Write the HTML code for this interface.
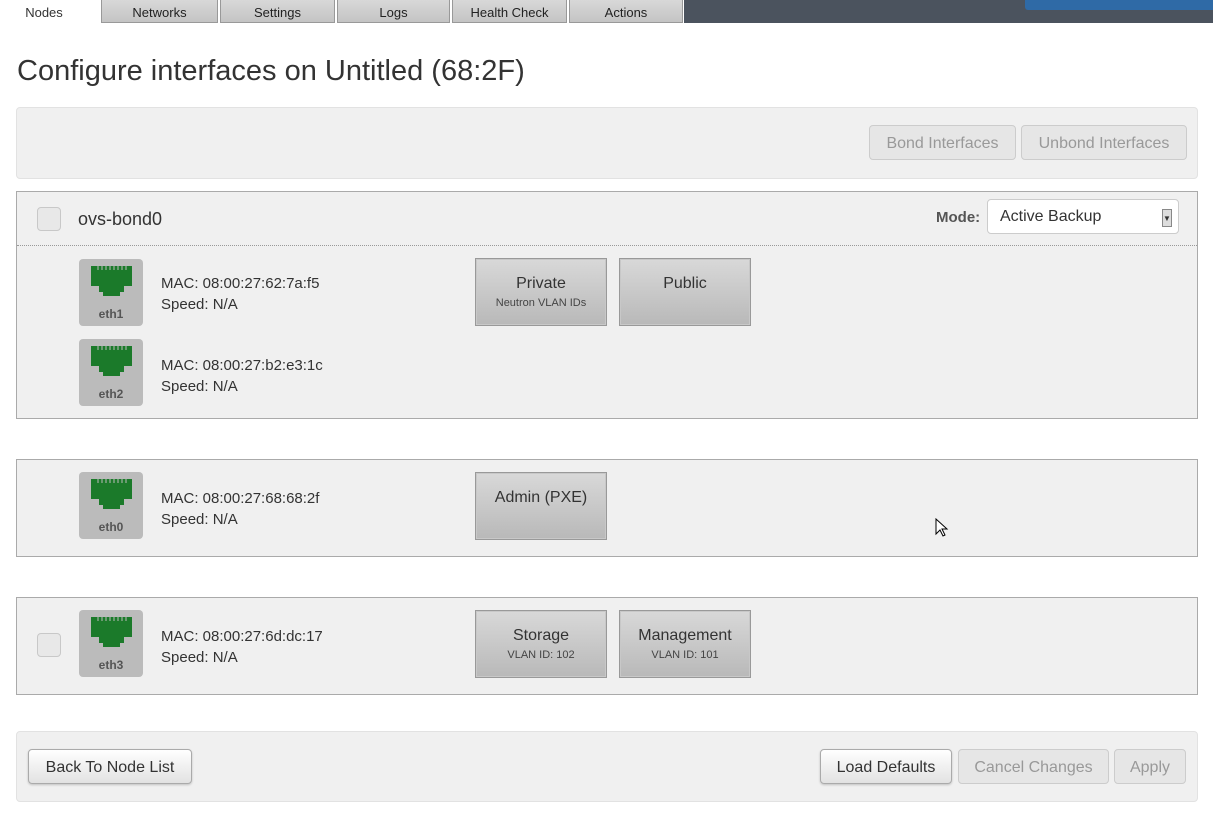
<!DOCTYPE html>
<html><head><style>
*{box-sizing:border-box}
body{margin:0;width:1213px;height:816px;overflow:hidden;background:#fff;font-family:"Liberation Sans",sans-serif;color:#333;position:relative}
.top{position:absolute;left:0;top:0;width:1213px;height:23px;background:#fff}
.dark{position:absolute;left:684px;top:0;width:529px;height:23px;background:#4b535e}
.tab{position:absolute;top:0;height:23px;background:linear-gradient(#d8d8d8,#c4c4c4);border:1px solid #999;border-top:none;font-size:13px;text-align:center;line-height:25px;color:#222}
.deploy{position:absolute;left:1025px;top:-6px;width:200px;height:16px;background:#2f6aa6;border-radius:3px}
h1{position:absolute;left:17px;top:55px;margin:0;font-weight:normal;font-size:29px;color:#333}
.well{position:absolute;left:16px;background:#f0f0f0;border:1px solid #e2e2e2;border-radius:4px}
.panel{position:absolute;left:16px;width:1182px;background:#f0f0f0;border:1px solid #aaa}
.btn{position:absolute;height:35px;border:1px solid #ccc;border-radius:4px;background:#e6e6e6;color:#999;font-size:16px;text-align:center;line-height:35px}
.btn.act{background:linear-gradient(#fff,#e2e2e2);border-color:#aaa;color:#333;box-shadow:0 1px 2px rgba(0,0,0,.2)}
.cb{position:absolute;width:24px;height:24px;border:1px solid #c8c8c8;border-radius:4px;background:#e8e8e8}
.port{position:absolute;width:64px;height:67px;background:#bbb;border-radius:4px}
.port svg{position:absolute;left:0;top:0}
.port span{position:absolute;left:0;width:64px;top:48px;text-align:center;font-size:12px;font-weight:bold;color:#555}
.mac{position:absolute;font-size:15px;line-height:21px;color:#333}
.net{position:absolute;width:132px;height:68px;border:2px solid #c8c8c8;background:linear-gradient(#d8d8d8,#b9b9b9);text-align:center;outline:1px solid #999;outline-offset:-1px}
.net b{display:block;font-weight:normal;font-size:16px;margin-top:15px;color:#333}
.net i{display:block;font-style:normal;font-size:11px;color:#444;margin-top:4px}
</style></head><body>
<div class="top"></div><div class="dark"></div><div class="deploy"></div>
<div style="position:absolute;left:0;top:0;width:88px;text-align:center;font-size:13px;line-height:25px;color:#333">Nodes</div>
<div class="tab" style="left:101px;width:117px">Networks</div>
<div class="tab" style="left:220px;width:115px">Settings</div>
<div class="tab" style="left:337px;width:113px">Logs</div>
<div class="tab" style="left:452px;width:115px">Health Check</div>
<div class="tab" style="left:569px;width:114px">Actions</div>
<h1>Configure interfaces on Untitled (68:2F)</h1>

<div class="well" style="top:107px;width:1182px;height:72px">
<div class="btn" style="left:852px;top:17px;width:147px">Bond Interfaces</div>
<div class="btn" style="left:1004px;top:17px;width:166px">Unbond Interfaces</div>
</div>

<svg width="0" height="0" style="position:absolute"><defs><g id="ic"><path fill="#1b7a2a" d="M12 7h41v20h-8v6h-4v4H24v-4h-4v-6h-8z"/><path stroke="#bbb" stroke-width="1" d="M19 7v4M23 7v4M27 7v4M31 7v4M35 7v4M39 7v4M43 7v4M47 7v4"/></g></defs></svg>

<div class="panel" style="top:191px;height:228px">
<div class="cb" style="left:20px;top:15px"></div>
<div style="position:absolute;left:61px;top:17px;font-size:18px">ovs-bond0</div>
<div style="position:absolute;left:919px;top:17px;font-size:15px;font-weight:bold;color:#555">Mode:</div>
<div style="position:absolute;left:970px;top:7px;width:192px;height:35px;background:#fff;border:1px solid #ccc;border-radius:4px;font-size:16px;line-height:33px;padding-left:12px">Active Backup<div style="position:absolute;right:6px;top:9px;width:10px;height:18px;background:#ddd;border:1px solid #888;font-size:8px;line-height:18px;text-align:center">▼</div></div>
<div style="position:absolute;left:0;top:53px;width:1180px;border-top:1px dotted #999"></div>
<div class="port" style="left:62px;top:67px"><svg width="64" height="67"><use href="#ic"/></svg><span>eth1</span></div>
<div class="mac" style="left:144px;top:81px">MAC: 08:00:27:62:7a:f5<br>Speed: N/A</div>
<div class="port" style="left:62px;top:147px"><svg width="64" height="67"><use href="#ic"/></svg><span>eth2</span></div>
<div class="mac" style="left:144px;top:163px">MAC: 08:00:27:b2:e3:1c<br>Speed: N/A</div>
<div class="net" style="left:458px;top:66px"><b>Private</b><i>Neutron VLAN IDs</i></div>
<div class="net" style="left:602px;top:66px"><b>Public</b></div>
</div>

<div class="panel" style="top:459px;height:98px">
<div class="port" style="left:62px;top:12px"><svg width="64" height="67"><use href="#ic"/></svg><span>eth0</span></div>
<div class="mac" style="left:144px;top:28px">MAC: 08:00:27:68:68:2f<br>Speed: N/A</div>
<div class="net" style="left:458px;top:12px"><b>Admin (PXE)</b></div>
</div>

<div class="panel" style="top:597px;height:98px">
<div class="cb" style="left:20px;top:35px"></div>
<div class="port" style="left:62px;top:12px"><svg width="64" height="67"><use href="#ic"/></svg><span>eth3</span></div>
<div class="mac" style="left:144px;top:28px">MAC: 08:00:27:6d:dc:17<br>Speed: N/A</div>
<div class="net" style="left:458px;top:12px"><b>Storage</b><i>VLAN ID: 102</i></div>
<div class="net" style="left:602px;top:12px"><b>Management</b><i>VLAN ID: 101</i></div>
</div>

<div class="well" style="top:731px;width:1182px;height:71px">
<div class="btn act" style="left:11px;top:17px;width:164px">Back To Node List</div>
<div class="btn act" style="left:803px;top:17px;width:132px">Load Defaults</div>
<div class="btn" style="left:941px;top:17px;width:151px">Cancel Changes</div>
<div class="btn" style="left:1097px;top:17px;width:72px">Apply</div>
</div>
<svg style="position:absolute;left:935px;top:518px" width="14" height="20"><path d="M1 1v15l4-4 3 6 2-1-3-6h5z" fill="#fff" stroke="#000"/></svg>
</body></html>
